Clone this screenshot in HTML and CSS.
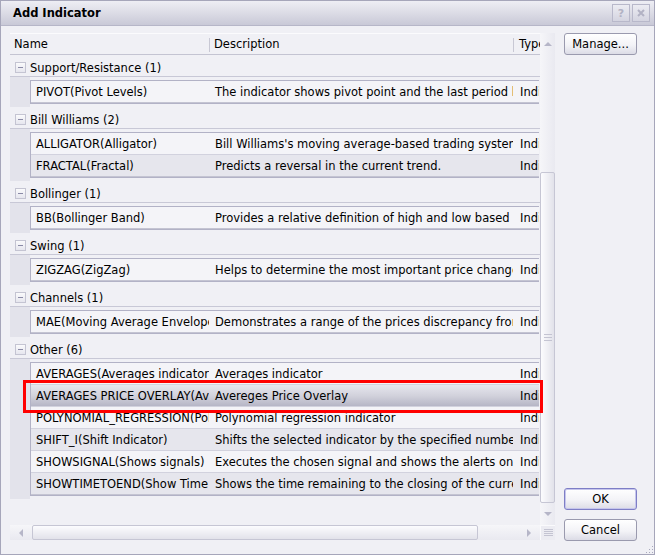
FILE: index.html
```html
<!DOCTYPE html>
<html lang="en">
<head>
  <meta charset="UTF-8">
  <title>Add Indicator</title>
  <link rel="stylesheet" href="styles.css">
</head>
<body>
  <div class="window">
    <div class="titlebar">
      <span class="title">Add Indicator</span>
      <div class="title-buttons">
        <span class="tbtn">?</span>
        <span class="tbtn">
          <svg width="8" height="8" viewBox="0 0 8 8"><path d="M1 1 L7 7 M7 1 L1 7" stroke="#b2b2c4" stroke-width="2"/></svg>
        </span>
      </div>
    </div>

    <div class="client">
      <div class="grid">
        <div class="view">
          <div class="header">
            <div class="hcell name">Name</div>
            <div class="hcell desc">Description</div>
            <div class="hcell type">Type</div>
          </div>

          <div class="group">
            <div class="group-row"><span class="toggle"></span>Support/Resistance (1)</div>
            <div class="group-body">
              <div class="indent"></div>
              <div class="block">
                <div class="row"><div class="cell name">PIVOT(Pivot Levels)</div><div class="cell desc">The indicator shows pivot point and the last period levels</div><div class="cell type">Indicator</div></div>
              </div>
            </div>
          </div>

          <div class="group">
            <div class="group-row"><span class="toggle"></span>Bill Williams (2)</div>
            <div class="group-body">
              <div class="indent"></div>
              <div class="block">
                <div class="row"><div class="cell name">ALLIGATOR(Alligator)</div><div class="cell desc">Bill Williams's moving average-based trading system</div><div class="cell type">Indicator</div></div>
                <div class="row"><div class="cell name">FRACTAL(Fractal)</div><div class="cell desc">Predicts a reversal in the current trend.</div><div class="cell type">Indicator</div></div>
              </div>
            </div>
          </div>

          <div class="group">
            <div class="group-row"><span class="toggle"></span>Bollinger (1)</div>
            <div class="group-body">
              <div class="indent"></div>
              <div class="block">
                <div class="row"><div class="cell name">BB(Bollinger Band)</div><div class="cell desc">Provides a relative definition of high and low based on volatility</div><div class="cell type">Indicator</div></div>
              </div>
            </div>
          </div>

          <div class="group">
            <div class="group-row"><span class="toggle"></span>Swing (1)</div>
            <div class="group-body">
              <div class="indent"></div>
              <div class="block">
                <div class="row"><div class="cell name">ZIGZAG(ZigZag)</div><div class="cell desc">Helps to determine the most important price changes</div><div class="cell type">Indicator</div></div>
              </div>
            </div>
          </div>

          <div class="group">
            <div class="group-row"><span class="toggle"></span>Channels (1)</div>
            <div class="group-body">
              <div class="indent"></div>
              <div class="block">
                <div class="row"><div class="cell name">MAE(Moving Average Envelope)</div><div class="cell desc">Demonstrates a range of the prices discrepancy from the moving average</div><div class="cell type">Indicator</div></div>
              </div>
            </div>
          </div>

          <div class="group">
            <div class="group-row"><span class="toggle"></span>Other (6)</div>
            <div class="group-body">
              <div class="indent"></div>
              <div class="block">
                <div class="row"><div class="cell name">AVERAGES(Averages indicator)</div><div class="cell desc">Averages indicator</div><div class="cell type">Indicator</div></div>
                <div class="row selected"><div class="cell name">AVERAGES PRICE OVERLAY(Averages Price Overlay)</div><div class="cell desc">Avereges Price Overlay</div><div class="cell type">Indicator</div></div>
                <div class="row"><div class="cell name">POLYNOMIAL_REGRESSION(Polynomial Regression)</div><div class="cell desc">Polynomial regression indicator</div><div class="cell type">Indicator</div></div>
                <div class="row"><div class="cell name">SHIFT_I(Shift Indicator)</div><div class="cell desc">Shifts the selected indicator by the specified number of bars</div><div class="cell type">Indicator</div></div>
                <div class="row"><div class="cell name">SHOWSIGNAL(Shows signals)</div><div class="cell desc">Executes the chosen signal and shows the alerts on the chart</div><div class="cell type">Indicator</div></div>
                <div class="row"><div class="cell name">SHOWTIMETOEND(Show Time To End)</div><div class="cell desc">Shows the time remaining to the closing of the current bar</div><div class="cell type">Indicator</div></div>
              </div>
            </div>
          </div>
        </div>

        <div class="vscroll">
          <div class="sbtn"><span class="arrow up"></span></div>
          <div class="vtrack">
            <div class="vthumb"><span class="grip-h"></span></div>
          </div>
          <div class="sbtn"><span class="arrow down"></span></div>
        </div>

        <div class="hscroll">
          <div class="sbtn"><span class="arrow left"></span></div>
          <div class="htrack">
            <div class="hthumb"></div>
          </div>
          <div class="sbtn"><span class="arrow right"></span></div>
        </div>

        <div class="corner"><span class="grip-corner"></span></div>
      </div>

      <div class="side">
        <button class="btn">Manage...</button>
        <button class="btn default ok">OK</button>
        <button class="btn cancel">Cancel</button>
      </div>
    </div>

    <div class="highlight"></div>
    <div class="sizegrip"></div>
  </div>
</body>
</html>
```

FILE: styles.css
```css
* {
  box-sizing: border-box;
}

body {
  margin: 0;
  font-family: "DejaVu Sans", Verdana, sans-serif;
  font-size: 11.5px;
  color: #000;
  background: #f0f0f5;
}

.window {
  position: relative;
  width: 655px;
  height: 555px;
  display: flex;
  flex-direction: column;
  border: 1px solid #a6a6ba;
  background: #f0f0f5;
}

/* title bar */
.titlebar {
  flex: none;
  height: 25px;
  display: flex;
  align-items: center;
  justify-content: space-between;
  padding: 0 4px 0 12px;
  background: linear-gradient(#eeeef4, #c9c9d7);
  border-bottom: 1px solid #b6b6c8;
}

.title {
  font-weight: bold;
}

.title-buttons {
  display: flex;
  gap: 2px;
}

.tbtn {
  width: 18px;
  height: 18px;
  display: flex;
  align-items: center;
  justify-content: center;
  border: 1px solid #b8b8ca;
  background: linear-gradient(#ececf2, #d4d4e0);
  color: #b2b2c4;
  font-weight: bold;
  font-size: 11px;
}

/* client area */
.client {
  flex: 1;
  display: flex;
  padding: 7px 0 0 9px;
}

.grid {
  width: 545px;
  height: 507px;
  display: grid;
  grid-template-columns: 530px 15px;
  grid-template-rows: 492px 15px;
}

.view {
  overflow: hidden;
  background: #f0f0f5;
}

.header {
  height: 22px;
  display: flex;
  padding-top: 1px;
  border-top: 1px solid #fbfbfd;
  border-bottom: 1px solid #c4c4d2;
  line-height: 19px;
}

.hcell {
  flex: none;
  white-space: nowrap;
  overflow: hidden;
}

.hcell.name {
  width: 199px;
  padding-left: 4px;
}

.hcell.desc,
.hcell.type {
  background: linear-gradient(#c8c8d4, #c8c8d4) left center / 1px 14px no-repeat;
}

.hcell.desc {
  width: 304px;
  padding-left: 5px;
}

.hcell.type {
  width: 27px;
  padding-left: 6px;
}

/* groups */
.group-row {
  height: 22px;
  display: flex;
  align-items: center;
  padding-top: 4px;
  border-bottom: 1px solid #c8c8d6;
  white-space: nowrap;
}

.toggle {
  width: 11px;
  height: 11px;
  margin: 0 4px 0 5px;
  border: 1px solid #c4c4d2;
  background: linear-gradient(#fafafc, #e6e6ee);
  display: flex;
  align-items: center;
  justify-content: center;
}

.toggle::after {
  content: "";
  width: 5px;
  height: 1px;
  background: #8a8aa6;
}

.group-body {
  display: flex;
}

.indent {
  width: 20px;
  flex: none;
  background: #e3e3eb;
}

.block {
  flex: none;
  margin: 3px 0;
  border-top: 1px solid #b2b2c6;
  border-left: 1px solid #b2b2c6;
  border-bottom: 1px solid #b2b2c6;
}

.row {
  height: 22px;
  display: flex;
  padding-top: 1px;
  line-height: 20px;
  border-bottom: 1px solid #d2d2de;
  background: #f4f4f8;
}

.row:nth-child(even) {
  background: #e6e6ed;
}

.row:last-child {
  border-bottom-color: #c4c4d2;
}

.row.selected {
  background: linear-gradient(#e6e6ee, #d2d2dc 50%, #b6b6c6);
}

.cell {
  flex: none;
  white-space: nowrap;
  overflow: hidden;
  padding-right: 2px;
}

.cell.name {
  width: 178px;
  padding-left: 5px;
}

.cell.desc {
  width: 304px;
  padding-left: 6px;
}

.cell.type {
  width: 26px;
  padding-left: 7px;
  padding-right: 0;
}

/* scroll bars */
.vscroll {
  display: flex;
  flex-direction: column;
  background: linear-gradient(90deg, #f6f6f9, #e9e9f0);
}

.sbtn {
  flex: none;
  width: 15px;
  height: 22px;
  display: flex;
  align-items: center;
  justify-content: center;
}

.hscroll .sbtn {
  width: 22px;
  height: 15px;
}

.arrow {
  width: 0;
  height: 0;
  border: 4px solid transparent;
}

.arrow.up {
  border-top: 0;
  border-bottom-color: #b6b6c8;
}

.arrow.down {
  border-bottom: 0;
  border-top-color: #b6b6c8;
}

.arrow.left {
  border-left: 0;
  border-right-color: #b6b6c8;
}

.arrow.right {
  border-right: 0;
  border-left-color: #b6b6c8;
}

.vtrack {
  flex: 1;
  display: flex;
  flex-direction: column;
  justify-content: flex-end;
}

.vthumb {
  height: 331px;
  display: flex;
  align-items: center;
  justify-content: center;
  border: 1px solid #c6c6d4;
  border-radius: 2px;
  background: linear-gradient(90deg, #fcfcfe, #e2e2ea);
}

.grip-h {
  width: 8px;
  height: 7px;
  background: repeating-linear-gradient(#c4c4d2 0 1px, transparent 1px 3px);
}

.hscroll {
  display: flex;
  background: linear-gradient(#f6f6f9, #e9e9f0);
}

.htrack {
  flex: 1;
  display: flex;
}

.hthumb {
  width: 446px;
  border: 1px solid #c6c6d4;
  border-radius: 2px;
  background: linear-gradient(#fcfcfe, #e2e2ea);
}

.corner {
  display: flex;
  align-items: center;
  justify-content: center;
  background: #ececf2;
  border-left: 1px solid #fafafc;
  border-top: 1px solid #fafafc;
}

.grip-corner {
  width: 9px;
  height: 8px;
  background: repeating-linear-gradient(#c4c4d2 0 1px, transparent 1px 2px);
}

/* side buttons */
.side {
  width: 73px;
  height: 508px;
  margin-left: 9px;
  display: flex;
  flex-direction: column;
}

.btn {
  height: 22px;
  padding: 0;
  font-family: inherit;
  font-size: 11.5px;
  color: #000;
  border: 1px solid #9a9aae;
  border-radius: 3px;
  background: linear-gradient(#ffffff, #f3f3f7 55%, #dcdce6);
}

.btn.default {
  border-color: #7e7ec6;
  box-shadow: inset 0 0 0 1px #c6c6ec;
}

.btn.ok {
  margin-top: auto;
}

.btn.cancel {
  margin-top: 9px;
}

/* annotation and grip overlays */
.highlight {
  position: absolute;
  left: 22px;
  top: 379px;
  width: 520px;
  height: 33px;
  border: 3px solid #ff0000;
}

.sizegrip {
  position: absolute;
  right: 1px;
  bottom: 1px;
  width: 8px;
  height: 8px;
  background: radial-gradient(circle, #a8a8bc 0.8px, transparent 1px) 0 0 / 3px 3px;
  clip-path: polygon(100% 0, 100% 100%, 0 100%);
}
```
